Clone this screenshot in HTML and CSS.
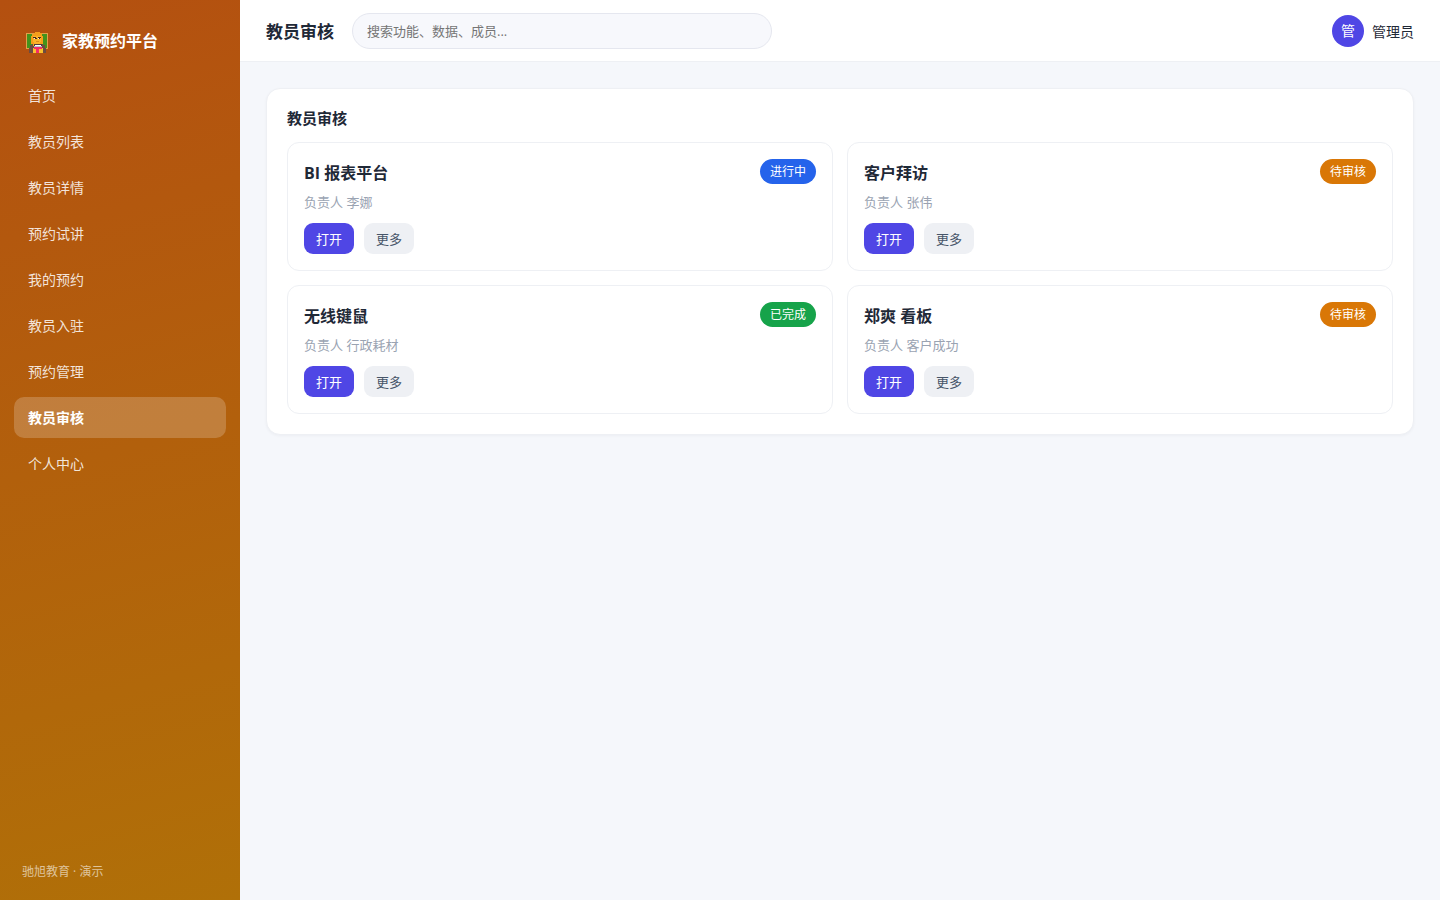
FILE: index.html
```html
<!DOCTYPE html>
<html lang="zh-CN">
<head>
  <meta charset="UTF-8">
  <meta name="viewport" content="width=device-width, initial-scale=1.0">
  <title>家教预约平台 - 教员审核</title>
  <link rel="stylesheet" href="styles.css">
</head>
<body>
  <div class="app">
    <aside class="sidebar">
      <div class="brand">
        <svg class="logo" viewBox="0 0 22 22" aria-hidden="true" shape-rendering="crispEdges">
          <rect x="0" y="1" width="22" height="16" fill="#e0a04a"/>
          <rect x="1" y="2" width="20" height="14" fill="#43931c"/>
          <path d="M3 21v-5h1v-3h2v-1h11v1h2v3h1v5z" fill="#6d4c41"/>
          <path d="M5 12V4h1V2h2V1h1V0h5v1h2v3h1v8h-2v2H7v-2z" fill="#f59e1b"/>
          <path d="M7 4h8v6h-1v2h-1v1H9v-1H8v-2H7z" fill="#fbb22a"/>
          <path d="M7 5h3v1h2V5h3v1h-1v1h-2V6h-1v1H9V6H7z" fill="#4a2c18"/>
          <path d="M8 6h1v1H8zM12 6h1v1h-1z" fill="#fff3d0"/>
          <path d="M10 9h3v1h-3z" fill="#e08a1a"/>
          <rect x="7" y="16" width="10" height="5" fill="#fbc02d"/>
          <rect x="8" y="12" width="8" height="3" fill="#4e3a3a"/>
          <rect x="9" y="13" width="6" height="1" fill="#fff"/>
          <rect x="8" y="14" width="8" height="1" fill="#b8c4cc"/>
          <path d="M8 15h8v2h-3v4h-3v-4H8z" fill="#f52b68"/>
        </svg>
        <span>家教预约平台</span>
      </div>
      <nav class="menu">
        <a href="#">首页</a>
        <a href="#">教员列表</a>
        <a href="#">教员详情</a>
        <a href="#">预约试讲</a>
        <a href="#">我的预约</a>
        <a href="#">教员入驻</a>
        <a href="#">预约管理</a>
        <a href="#" class="active">教员审核</a>
        <a href="#">个人中心</a>
      </nav>
      <div class="side-foot">驰旭教育 · 演示</div>
    </aside>
    <div class="main">
      <header class="topbar">
        <h1>教员审核</h1>
        <input type="search" class="search" placeholder="搜索功能、数据、成员..." aria-label="搜索">
        <div class="user">
          <span class="avatar">管</span>
          <span>管理员</span>
        </div>
      </header>
      <main class="content">
        <section class="panel">
          <h2>教员审核</h2>
          <div class="grid">
            <article class="card">
              <div class="card-head"><h3>BI 报表平台</h3><span class="tag blue">进行中</span></div>
              <p>负责人 李娜</p>
              <div class="actions"><button class="btn primary">打开</button><button class="btn">更多</button></div>
            </article>
            <article class="card">
              <div class="card-head"><h3>客户拜访</h3><span class="tag orange">待审核</span></div>
              <p>负责人 张伟</p>
              <div class="actions"><button class="btn primary">打开</button><button class="btn">更多</button></div>
            </article>
            <article class="card">
              <div class="card-head"><h3>无线键鼠</h3><span class="tag green">已完成</span></div>
              <p>负责人 行政耗材</p>
              <div class="actions"><button class="btn primary">打开</button><button class="btn">更多</button></div>
            </article>
            <article class="card">
              <div class="card-head"><h3>郑爽 看板</h3><span class="tag orange">待审核</span></div>
              <p>负责人 客户成功</p>
              <div class="actions"><button class="btn primary">打开</button><button class="btn">更多</button></div>
            </article>
          </div>
        </section>
      </main>
    </div>
  </div>
</body>
</html>
```
FILE: styles.css
```css
* {
  box-sizing: border-box;
}
body {
  margin: 0;
  font-family: "Open Sans", "Noto Sans CJK SC", sans-serif;
  font-size: 14px;
  color: #1f2937;
  background: #f5f7fb;
}
h1, h2, h3, p {
  margin: 0;
}
.app {
  display: flex;
  min-height: 100vh;
}
.sidebar {
  width: 240px;
  flex-shrink: 0;
  display: flex;
  flex-direction: column;
  padding: 22px 14px 21px;
  color: #fff;
  background: linear-gradient(165deg, #b45010, #b07008);
}
.brand {
  display: flex;
  align-items: center;
  gap: 14px;
  height: 36px;
  padding: 0 12px;
  margin-bottom: 17px;
  font-size: 16px;
  font-weight: 700;
}
.logo {
  width: 22px;
  height: 22px;
  margin-top: 6px;
}
.menu {
  display: flex;
  flex-direction: column;
  gap: 5px;
}
.menu a {
  padding: 0 14px;
  line-height: 41px;
  color: rgba(255, 255, 255, 0.85);
  text-decoration: none;
  border-radius: 10px;
}
.menu a.active {
  color: #fff;
  font-weight: 700;
  background: rgba(255, 255, 255, 0.2);
}
.side-foot {
  margin-top: auto;
  padding: 0 8px;
  font-size: 12px;
  line-height: 14px;
  color: rgba(255, 255, 255, 0.6);
}
.main {
  flex: 1;
  min-width: 0;
}
.topbar {
  display: flex;
  align-items: center;
  gap: 18px;
  height: 62px;
  padding: 0 26px;
  background: #fff;
  border-bottom: 1px solid #eef0f4;
}
.topbar h1 {
  font-size: 17px;
}
.search {
  width: 420px;
  height: 36px;
  padding: 0 14px;
  font-family: inherit;
  font-size: 13px;
  background: #f7f8fc;
  border: 1px solid #e5e7ef;
  border-radius: 18px;
}
.user {
  display: flex;
  align-items: center;
  gap: 8px;
  margin-left: auto;
}
.avatar {
  width: 32px;
  line-height: 32px;
  text-align: center;
  color: #fff;
  background: #4f46e5;
  border-radius: 50%;
}
.content {
  padding: 26px;
}
.panel {
  padding: 19px 20px 20px;
  background: #fff;
  border: 1px solid #eef0f4;
  border-radius: 14px;
  box-shadow: 0 1px 3px rgba(15, 23, 42, 0.04);
}
.panel h2 {
  margin-bottom: 14px;
  font-size: 15px;
  line-height: 20px;
}
.grid {
  display: grid;
  grid-template-columns: 1fr 1fr;
  gap: 14px;
}
.card {
  padding: 16px;
  border: 1px solid #eef0f4;
  border-radius: 12px;
}
.card-head {
  display: flex;
  align-items: center;
  justify-content: space-between;
  height: 25px;
}
.card h3 {
  font-size: 16px;
}
.card p {
  margin: 9px 0 12px;
  font-size: 13px;
  line-height: 18px;
  color: #9aa3b2;
}
.tag {
  padding: 0 10px;
  font-size: 12px;
  line-height: 25px;
  color: #fff;
  border-radius: 13px;
}
.blue {
  background: #2563eb;
}
.orange {
  background: #d97706;
}
.green {
  background: #16a34a;
}
.actions {
  display: flex;
  gap: 10px;
}
.btn {
  height: 31px;
  padding: 0 12px;
  font-family: inherit;
  font-size: 13px;
  color: #475569;
  background: #eef0f4;
  border: 0;
  border-radius: 9px;
}
.primary {
  color: #fff;
  background: #4f46e5;
}
```
